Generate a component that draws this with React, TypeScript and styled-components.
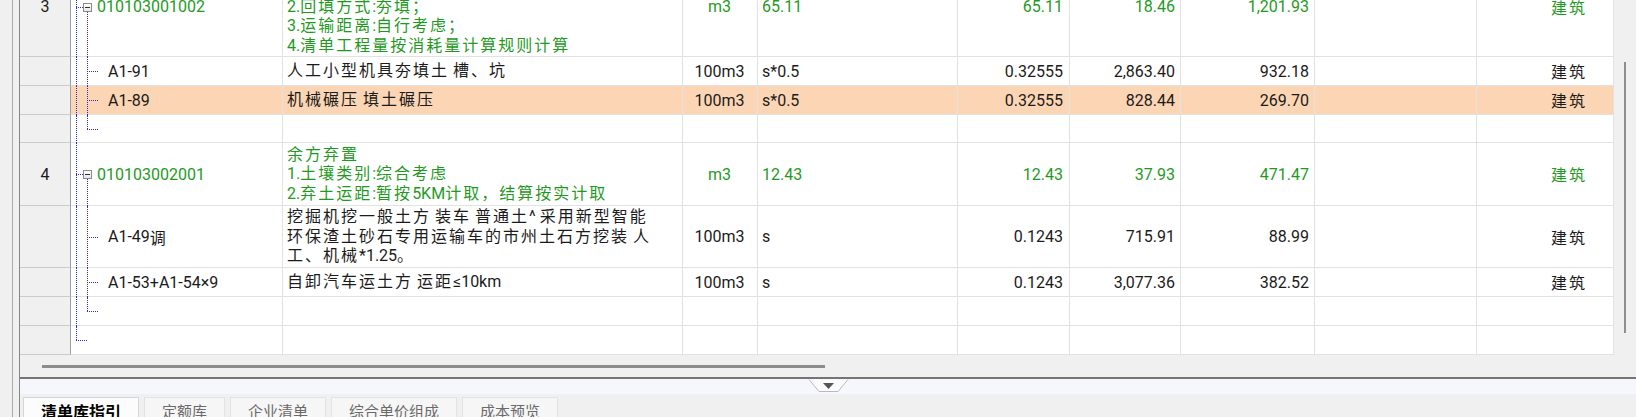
import React from 'react';
import styled, { createGlobalStyle } from 'styled-components';

const GlobalStyle = createGlobalStyle`
  html, body { margin: 0; padding: 0; background: #f0f0f0; overflow: hidden; }
  #root { width: 1636px; height: 417px; overflow: hidden; }
  *, *::before, *::after { box-sizing: border-box; }
`;

const FONT = `Roboto, "Noto Sans CJK SC", "Noto Sans", sans-serif`;
const GREEN = '#1f9a1f';
const INK = '#1b1b1b';
const DOT = '#2a2ad0';
const COLS = '51px 212px 400px 75px 200px 112px 111px 134px 162px 137px';

const Page = styled.div`
  display: flex;
  width: 1636px;
  height: 417px;
  background: #f0f0f0;
  font-family: ${FONT};
  font-size: 16px;
  color: ${INK};
`;
const Gutter = styled.div`
  width: 12px;
  flex: none;
`;
const Frame = styled.div`
  flex: 1;
  min-width: 0;
  display: flex;
  border-left: 1px solid #aaaaaa;
  padding-left: 6px;
`;
const Workspace = styled.div`
  flex: 1;
  min-width: 0;
  display: flex;
  flex-direction: column;
  border-left: 1px solid #868686;
`;
const GridPanel = styled.div`
  flex: none;
  display: flex;
  flex-direction: column;
  border-bottom: 2px solid #747474;
`;
const GridArea = styled.div`
  display: flex;
  height: 355px;
`;
const Grid = styled.div`
  width: 1594px;
  flex: none;
  overflow: hidden;
  background: #fff;
`;
const GridBody = styled.div`
  margin-top: -43px;
`;
const VScroll = styled.div`
  flex: 1;
  display: flex;
  justify-content: center;
  padding-top: 62px;
  background: #f0f0f0;
`;
const VThumb = styled.div`
  width: 2px;
  height: 271px;
  background: #8e8e8e;
`;
const HScroll = styled.div`
  height: 22px;
  display: flex;
  align-items: center;
  padding-left: 22px;
  background: #f0f0f0;
`;
const HThumb = styled.div`
  width: 783px;
  height: 3px;
  background: #8c8c8c;
`;
const Band = styled.div`
  height: 15px;
  flex: none;
  display: flex;
  justify-content: center;
  align-items: flex-start;
  background: #f6f7fc;
`;
const TabStrip = styled.div`
  flex: 1;
  display: flex;
  gap: 5px;
  padding: 3px 0 0 3px;
  overflow: hidden;
`;
const Tab = styled.div<{ $active?: boolean }>`
  height: 28px;
  padding: 3px 17px 0;
  border: 1px solid ${p => (p.$active ? '#d6d6d6' : '#e3e3e3')};
  border-bottom: none;
  background: ${p => (p.$active ? '#fcfcfc' : '#f6f6f6')};
  color: ${p => (p.$active ? '#000' : '#6a6a6a')};
  font-family: "Noto Sans CJK SC", sans-serif;
  font-size: ${p => (p.$active ? '16px' : '15px')};
  font-weight: ${p => (p.$active ? 700 : 400)};
  line-height: 20px;
  white-space: nowrap;
`;

const Row = styled.div<{ $h: number }>`
  display: grid;
  grid-template-columns: ${COLS};
  height: ${p => p.$h}px;
`;
const Cell = styled.div<{ $align?: 'left' | 'center' | 'right'; $green?: boolean; $hl?: boolean; $padR?: number }>`
  display: flex;
  align-items: center;
  justify-content: ${p => (p.$align === 'right' ? 'flex-end' : p.$align === 'center' ? 'center' : 'flex-start')};
  padding: 0 ${p => p.$padR ?? 5}px 0 4px;
  border-right: 1px solid #e2e2e2;
  border-bottom: 1px solid #e2e2e2;
  background: ${p => (p.$hl ? '#fcd6b4' : '#fff')};
  color: ${p => (p.$green ? GREEN : INK)};
  white-space: nowrap;
  overflow: hidden;
`;
const HeadCell = styled.div`
  display: flex;
  align-items: center;
  justify-content: center;
  background: #f0f0f0;
  border-right: 1px solid #9f9f9f;
  border-bottom: 1px solid #cbcbcb;
  color: ${INK};
`;
const TreeCell = styled.div<{ $indent: number; $green?: boolean; $hl?: boolean }>`
  position: relative;
  display: flex;
  align-items: center;
  padding-left: ${p => p.$indent}px;
  border-right: 1px solid #e2e2e2;
  border-bottom: 1px solid #e2e2e2;
  background: ${p => (p.$hl ? '#fcd6b4' : '#fff')};
  color: ${p => (p.$green ? GREEN : INK)};
  white-space: nowrap;
`;
const VLine = styled.span<{ $x: number; $top: string; $bottom: string }>`
  position: absolute;
  left: ${p => p.$x}px;
  top: ${p => p.$top};
  bottom: ${p => p.$bottom};
  border-left: 1px dotted ${DOT};
  z-index: 1;
`;
const HLine = styled.span<{ $x: number; $w: number }>`
  position: absolute;
  left: ${p => p.$x}px;
  width: ${p => p.$w}px;
  top: 50%;
  border-top: 1px dotted ${DOT};
`;
const FoldBox = styled.span`
  position: absolute;
  left: 12px;
  top: calc(50% - 4px);
  width: 9px;
  height: 9px;
  border: 1px solid #8b8b8b;
  background: linear-gradient(#ffffff, #e6e6e6);
  z-index: 2;
  &::after {
    content: '';
    position: absolute;
    left: 1px;
    top: 3px;
    width: 5px;
    height: 1px;
    background: #333;
  }
`;
const Desc = styled.div`
  display: flex;
  flex-direction: column;
  line-height: 19.5px;
`;
const Han = styled.span`
  letter-spacing: 2px;
`;

const CJK = /([\u2E80-\u9FFF\uFF00-\uFFEF]+)/;
function mixed(text: string) {
  return text.split(CJK).map((part, i) =>
    i % 2 === 1 ? <Han key={i}>{part}</Han> : <React.Fragment key={i}>{part}</React.Fragment>
  );
}

type Kind = 'bill' | 'item' | 'itemEnd' | 'rootEnd';
interface RowData {
  h: number;
  kind: Kind;
  no?: string;
  code?: string;
  desc?: string[];
  unit?: string;
  expr?: string;
  qty?: string;
  price?: string;
  total?: string;
  spec?: string;
  green?: boolean;
  hl?: boolean;
}

const rows: RowData[] = [
  {
    h: 100, kind: 'bill', no: '3', code: '010103001002', green: true,
    desc: ['回填方', '1.密实度要求:满足规范要求；', '2.回填方式:夯填；', '3.运输距离:自行考虑；', '4.清单工程量按消耗量计算规则计算'],
    unit: 'm3', expr: '65.11', qty: '65.11', price: '18.46', total: '1,201.93', spec: '建筑',
  },
  { h: 29, kind: 'item', code: 'A1-91', desc: ['人工小型机具夯填土 槽、坑'], unit: '100m3', expr: 's*0.5', qty: '0.32555', price: '2,863.40', total: '932.18', spec: '建筑' },
  { h: 29, kind: 'item', code: 'A1-89', desc: ['机械碾压 填土碾压'], unit: '100m3', expr: 's*0.5', qty: '0.32555', price: '828.44', total: '269.70', spec: '建筑', hl: true },
  { h: 28, kind: 'itemEnd' },
  {
    h: 63, kind: 'bill', no: '4', code: '010103002001', green: true,
    desc: ['余方弃置', '1.土壤类别:综合考虑', '2.弃土运距:暂按5KM计取，结算按实计取'],
    unit: 'm3', expr: '12.43', qty: '12.43', price: '37.93', total: '471.47', spec: '建筑',
  },
  {
    h: 62, kind: 'item', code: 'A1-49调',
    desc: ['挖掘机挖一般土方 装车 普通土^ 采用新型智能', '环保渣土砂石专用运输车的市州土石方挖装 人', '工、机械*1.25。'],
    unit: '100m3', expr: 's', qty: '0.1243', price: '715.91', total: '88.99', spec: '建筑',
  },
  { h: 29, kind: 'item', code: 'A1-53+A1-54×9', desc: ['自卸汽车运土方 运距≤10km'], unit: '100m3', expr: 's', qty: '0.1243', price: '3,077.36', total: '382.52', spec: '建筑' },
  { h: 29, kind: 'itemEnd' },
  { h: 29, kind: 'rootEnd' },
];

function TreeLines({ kind }: { kind: Kind }) {
  const full = { $top: '0', $bottom: '-1px' };
  if (kind === 'bill') {
    return (
      <>
        <VLine $x={5} {...full} />
        <HLine $x={5} $w={7} />
        <FoldBox />
        <VLine $x={16} $top="calc(50% + 5px)" $bottom="-1px" />
      </>
    );
  }
  if (kind === 'item') {
    return (
      <>
        <VLine $x={5} {...full} />
        <VLine $x={16} {...full} />
        <HLine $x={16} $w={11} />
      </>
    );
  }
  if (kind === 'itemEnd') {
    return (
      <>
        <VLine $x={5} {...full} />
        <VLine $x={16} $top="0" $bottom="50%" />
        <HLine $x={16} $w={11} />
      </>
    );
  }
  return (
    <>
      <VLine $x={5} $top="0" $bottom="50%" />
      <HLine $x={5} $w={11} />
    </>
  );
}

function GridRow({ r }: { r: RowData }) {
  const g = r.green;
  const hl = r.hl;
  return (
    <Row $h={r.h}>
      <HeadCell>{r.no}</HeadCell>
      <TreeCell $indent={r.kind === 'bill' ? 26 : 37} $green={g} $hl={hl}>
        <TreeLines kind={r.kind} />
        {r.code && mixed(r.code)}
      </TreeCell>
      <Cell $green={g} $hl={hl}>
        {r.desc && (
          <Desc>
            {r.desc.map((l, i) => (
              <div key={i}>{mixed(l)}</div>
            ))}
          </Desc>
        )}
      </Cell>
      <Cell $align="center" $green={g} $hl={hl}>{r.unit}</Cell>
      <Cell $green={g} $hl={hl}>{r.expr}</Cell>
      <Cell $align="right" $padR={6} $green={g} $hl={hl}>{r.qty}</Cell>
      <Cell $align="right" $green={g} $hl={hl}>{r.price}</Cell>
      <Cell $align="right" $green={g} $hl={hl}>{r.total}</Cell>
      <Cell $hl={hl} />
      <Cell $align="right" $padR={26} $green={g} $hl={hl}>{r.spec && mixed(r.spec)}</Cell>
    </Row>
  );
}

function SplitterArrow() {
  return (
    <svg width="41" height="14" viewBox="0 0 41 14">
      <path d="M1 0.5 L11 12.5 L30 12.5 L40 0.5" fill="#fbfbfd" stroke="#b9b9c6" strokeWidth="1" />
      <path d="M15 4 L26 4 L20.5 10 Z" fill="#555" />
    </svg>
  );
}

const tabs = ['清单库指引', '定额库', '企业清单', '综合单价组成', '成本预览'];

export default function App() {
  return (
    <>
      <GlobalStyle />
      <Page>
        <Gutter />
        <Frame>
          <Workspace>
            <GridPanel>
              <GridArea>
                <Grid>
                  <GridBody>
                    {rows.map((r, i) => (
                      <GridRow key={i} r={r} />
                    ))}
                  </GridBody>
                </Grid>
                <VScroll>
                  <VThumb />
                </VScroll>
              </GridArea>
              <HScroll>
                <HThumb />
              </HScroll>
            </GridPanel>
            <Band>
              <SplitterArrow />
            </Band>
            <TabStrip>
              {tabs.map((t, i) => (
                <Tab key={t} $active={i === 0}>{t}</Tab>
              ))}
            </TabStrip>
          </Workspace>
        </Frame>
      </Page>
    </>
  );
}
